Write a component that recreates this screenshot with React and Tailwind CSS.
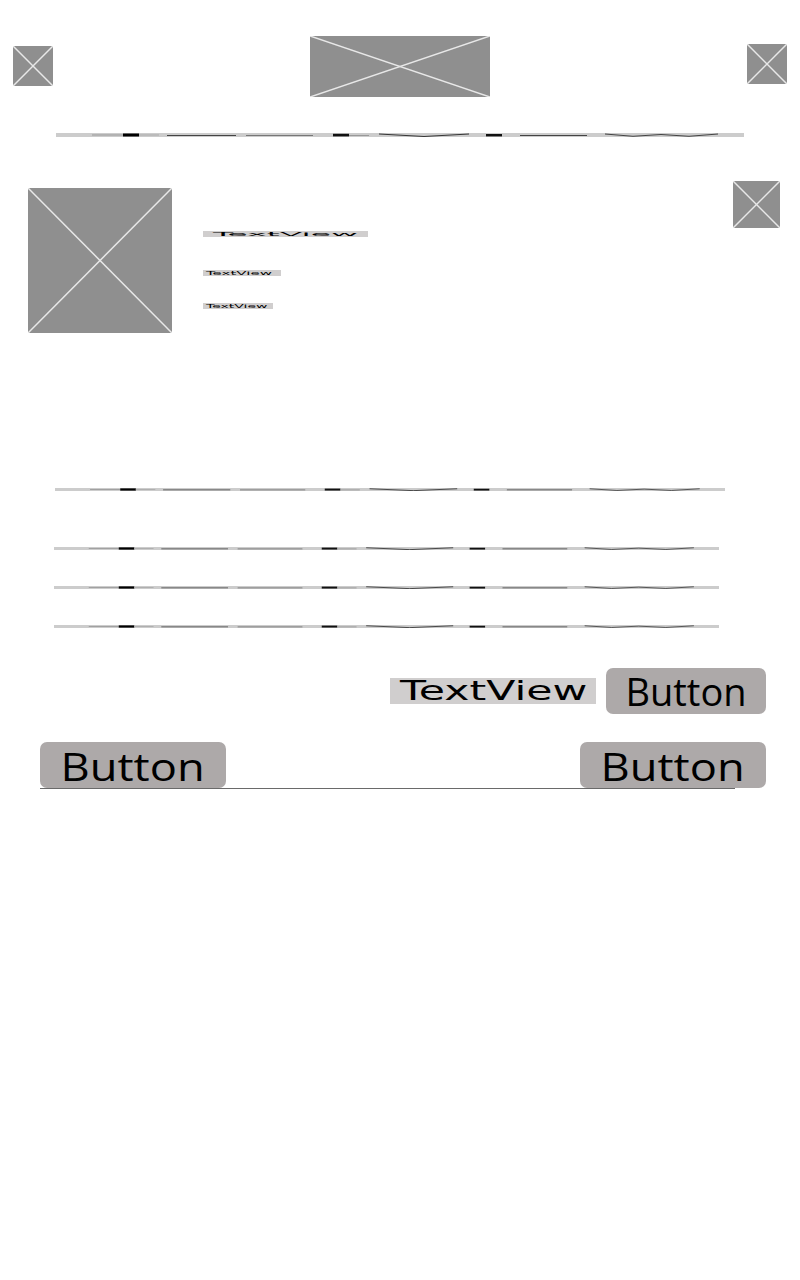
function Placeholder({ className }) {
  return (
    <div className={`bg-[#8f8f8f] ${className}`}>
      <svg width="100%" height="100%" viewBox="0 0 100 100" preserveAspectRatio="none">
        <line x1="0" y1="0" x2="100" y2="100" stroke="#e8e8e8" strokeWidth="1.5" vectorEffect="non-scaling-stroke" />
        <line x1="100" y1="0" x2="0" y2="100" stroke="#e8e8e8" strokeWidth="1.5" vectorEffect="non-scaling-stroke" />
      </svg>
    </div>
  );
}

// squashed text line (a TextView drawn at almost no height)
function Rule({ className }) {
  return (
    <div className={`bg-[#cccccc] ${className}`}>
      <svg width="100%" height="100%" viewBox="0 0 688 4" preserveAspectRatio="none">
        <line x1="36" y1="2" x2="67" y2="2" stroke="#999" strokeWidth="1" />
        <rect x="67" y="0.5" width="16" height="3" fill="#000" />
        <line x1="83" y1="2" x2="103" y2="2" stroke="#aaa" strokeWidth="1" />
        <line x1="111" y1="2.5" x2="180" y2="2.5" stroke="#444" strokeWidth="1.2" />
        <line x1="190" y1="2.5" x2="257" y2="2.5" stroke="#777" strokeWidth="1" />
        <rect x="277" y="0.8" width="16" height="2.6" fill="#111" />
        <line x1="293" y1="2.5" x2="313" y2="2.5" stroke="#999" strokeWidth="1" />
        <polyline points="323,1 368,3.5 413,1" fill="none" stroke="#222" strokeWidth="0.9" />
        <rect x="430" y="1" width="16" height="2.4" fill="#111" />
        <line x1="464" y1="2.5" x2="531" y2="2.5" stroke="#444" strokeWidth="1.1" />
        <polyline points="549,1 577,3.3 605,1.5 633,3.3 662,1" fill="none" stroke="#333" strokeWidth="0.9" />
      </svg>
    </div>
  );
}

function TinyText({ className, size, sy }) {
  return (
    <div className={`bg-[#d0cece] overflow-hidden flex items-center ${className}`}>
      <span
        className="inline-block leading-none text-black font-['DejaVu_Sans',sans-serif] whitespace-nowrap origin-left"
        style={{ fontSize: size, transform: `scaleY(${sy})` }}
      >
        TextView
      </span>
    </div>
  );
}

function Btn({ className, wide }) {
  return (
    <div className={`h-[46px] rounded-[7px] bg-[#ada9a9] flex items-center justify-center text-black text-[38px] leading-none font-['Open_Sans',sans-serif] ${className}`}>
      <span className={wide ? 'inline-block scale-x-[1.19] mt-[2px]' : 'inline-block'}>Button</span>
    </div>
  );
}

export default function App() {
  return (
    <div className="w-[800px] h-[1280px] bg-white overflow-hidden">
      {/* top bar */}
      <div className="flex items-start justify-between pt-[36px] px-[13px]">
        <Placeholder className="w-[40px] h-[40px] mt-[10px]" />
        <Placeholder className="w-[180px] h-[61px]" />
        <Placeholder className="w-[40px] h-[40px] mt-[8px]" />
      </div>

      <Rule className="mt-[36px] ml-[56px] w-[688px] h-[4px]" />

      {/* card */}
      <div className="flex items-start mt-[44px] pl-[28px]">
        <Placeholder className="w-[144px] h-[145px] mt-[7px]" />
        <div className="flex flex-col ml-[31px] mt-[50px]">
          <TinyText className="w-[165px] h-[6px] pl-[10px]" size={33} sy={0.15} />
          <TinyText className="w-[78px] h-[6px] mt-[33px] pl-[3px]" size={15} sy={0.4} />
          <TinyText className="w-[70px] h-[6px] mt-[27px] pl-[3px]" size={14} sy={0.4} />
        </div>
        <Placeholder className="w-[47px] h-[47px] ml-auto mr-[20px]" />
      </div>

      <Rule className="mt-[155px] ml-[55px] w-[670px] h-[3px]" />
      <Rule className="mt-[56px] ml-[54px] w-[665px] h-[3px]" />
      <Rule className="mt-[36px] ml-[54px] w-[665px] h-[3px]" />
      <Rule className="mt-[36px] ml-[54px] w-[665px] h-[3px]" />

      {/* text + button row */}
      <div className="flex items-center justify-end gap-[10px] mt-[40px] pr-[34px]">
        <div className="w-[206px] h-[26px] bg-[#d0cece] flex items-center pl-[10px]">
          <span className="inline-block leading-none text-black text-[26px] font-['DejaVu_Sans',sans-serif] whitespace-nowrap origin-left scale-x-[1.64]">
            TextView
          </span>
        </div>
        <Btn className="w-[160px]" />
      </div>

      {/* bottom buttons */}
      <div className="mt-[28px] pl-[40px] pr-[34px]">
        <div className="flex justify-between">
          <Btn className="w-[186px]" wide />
          <Btn className="w-[186px]" wide />
        </div>
        <div className="h-[1px] w-[695px] bg-[#6a6a6a]" />
      </div>
    </div>
  );
}
